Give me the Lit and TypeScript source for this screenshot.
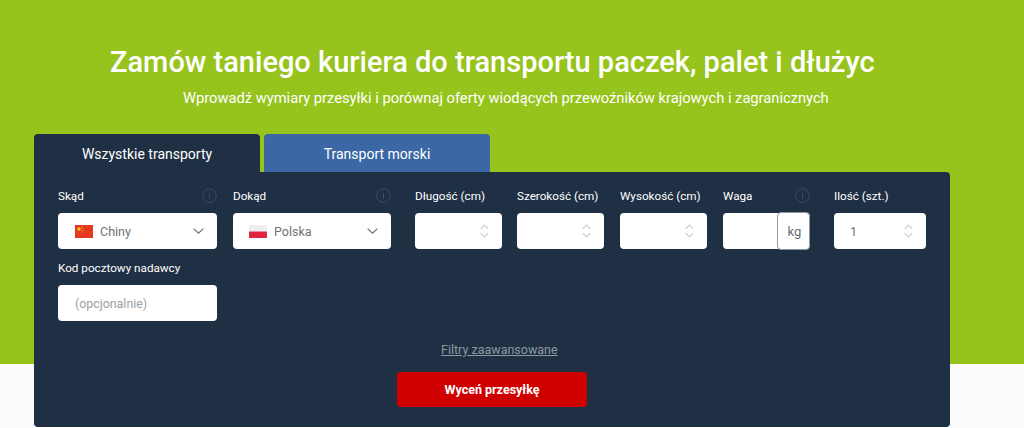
import { LitElement, html, css, svg } from "lit";
import { customElement } from "lit/decorators.js";

const spin = html`<svg class="spin" width="9" height="14" viewBox="0 0 9 14" fill="none" stroke="#c9cdd1" stroke-width="1.1"><path d="M.7 4.8 4.5 1l3.8 3.8M.7 9.2 4.5 13l3.8-3.8"/></svg>`;
const chev = html`<svg class="chev" width="11" height="6" viewBox="0 0 11 6" fill="none" stroke="#6a7278" stroke-width="1.2"><path d="M.6.6 5.5 5.2 10.4.6"/></svg>`;
const info = html`<svg class="info" width="15" height="15" viewBox="0 0 15 15" fill="none" stroke="#3f4c5a"><circle cx="7.5" cy="7.5" r="6.8"/><path d="M7.5 3.6v1M7.5 6v5"/></svg>`;
const cn = html`<svg width="18" height="13" viewBox="0 0 18 13"><rect width="18" height="13" fill="#e5391f"/>${svg`<circle cx="4" cy="4" r="1.8" fill="#f8c92e"/><circle cx="7" cy="1.8" r=".5" fill="#f8c92e"/><circle cx="8" cy="3.5" r=".5" fill="#f8c92e"/><circle cx="8" cy="5.5" r=".5" fill="#f8c92e"/><circle cx="7" cy="7" r=".5" fill="#f8c92e"/>`}</svg>`;
const pl = html`<svg width="18" height="13" viewBox="0 0 18 13"><rect width="18" height="6.5" fill="#eeeeee"/><rect y="6.5" width="18" height="6.5" fill="#e0243f"/></svg>`;

@customElement("app-root")
export class AppRoot extends LitElement {
  static styles = css`
    :host { display: block; width: 1024px; height: 428px; overflow: hidden; position: relative; font-family: Roboto, sans-serif; background: linear-gradient(#97c31d 0 364px, #fcfcfc 364px); }
    .hero { display: flex; flex-direction: column; padding-top: 43px; color: #fff; }
    h1 { margin: 0 0 0 110px; font-size: 29px; line-height: 38px; font-weight: 500; white-space: nowrap; }
    .sub { margin: 7px 0 0 183px; font-size: 14.7px; line-height: 20px; white-space: nowrap; }
    .tabs { display: flex; gap: 4px; margin: 26px 0 0 34px; }
    .tab { width: 226px; height: 38px; box-sizing: border-box; border-radius: 4px 4px 0 0; font-size: 14px; display: flex; align-items: center; justify-content: center; color: #fff; background: #1f3044; padding-top: 1px; }
    .tab.alt { background: #3b68a4; }
    .card { width: 916px; height: 255px; box-sizing: border-box; margin-left: 34px; background: #1f3044; border-radius: 0 4px 4px 4px; padding: 16px 24px 0; display: flex; flex-direction: column; }
    .row { display: flex; }
    .f { display: flex; flex-direction: column; }
    .m15 { margin-right: 15px; }
    .m16 { margin-right: 16px; }
    .m24 { margin-right: 24px; }
    .lab { height: 25px; font-size: 11.7px; line-height: 16px; color: #fff; display: flex; justify-content: space-between; align-items: flex-start; white-space: nowrap; }
    .box { height: 36px; box-sizing: border-box; background: #fff; border-radius: 4px; display: flex; align-items: center; font-size: 12.5px; color: #6e7276; }
    .sel { width: 159px; padding: 0 13px 0 17px; }
    .sel.b { width: 158px; padding-left: 16px; }
    .sel svg:first-child { margin-right: 7px; flex: none; }
    .sel .chev { margin-left: auto; }
    .num { width: 87px; justify-content: flex-end; padding-right: 13px; }
    .qty { width: 92px; justify-content: space-between; padding: 0 13px 0 16px; }
    .weight { width: 87px; padding: 0; justify-content: flex-end; }
    .kg { width: 33px; height: 38px; margin: -1px 0; box-sizing: border-box; border: 1px solid #8d98a5; border-radius: 4px; background: #fff; display: flex; align-items: center; justify-content: center; padding-left: 2px; font-size: 13px; color: #666c72; }
    .second { margin-top: 11px; }
    .post { width: 159px; padding-left: 17px; font-size: 12.4px; color: #9a9fa4; }
    .link { margin: 21px 0 0 383px; font-size: 12.5px; line-height: 16px; color: #8d98a5; text-decoration: underline; }
    .btn { align-self: flex-start; margin: 14px 0 0 339px; width: 190px; height: 35px; background: #cf0000; border-radius: 4px; color: #fff; font-size: 12.5px; font-weight: 700; display: flex; align-items: center; justify-content: center; }
  `;

  render() {
    return html`
      <div class="hero">
        <h1>Zamów taniego kuriera do transportu paczek, palet i dłużyc</h1>
        <div class="sub">Wprowadź wymiary przesyłki i porównaj oferty wiodących przewoźników krajowych i zagranicznych</div>
      </div>
      <div class="tabs">
        <div class="tab">Wszystkie transporty</div>
        <div class="tab alt">Transport morski</div>
      </div>
      <div class="card">
        <div class="row">
          <div class="f m16"><div class="lab">Skąd ${info}</div><div class="box sel">${cn}Chiny${chev}</div></div>
          <div class="f m24"><div class="lab">Dokąd ${info}</div><div class="box sel b">${pl}Polska${chev}</div></div>
          <div class="f m15"><div class="lab">Długość (cm)</div><div class="box num">${spin}</div></div>
          <div class="f m16"><div class="lab">Szerokość (cm)</div><div class="box num">${spin}</div></div>
          <div class="f m16"><div class="lab">Wysokość (cm)</div><div class="box num">${spin}</div></div>
          <div class="f m24"><div class="lab">Waga ${info}</div><div class="box weight"><div class="kg">kg</div></div></div>
          <div class="f"><div class="lab">Ilość (szt.)</div><div class="box qty">1${spin}</div></div>
        </div>
        <div class="row second">
          <div class="f"><div class="lab">Kod pocztowy nadawcy</div><div class="box post">(opcjonalnie)</div></div>
        </div>
        <div class="link">Filtry zaawansowane</div>
        <div class="btn">Wyceń przesyłkę</div>
      </div>
    `;
  }
}
